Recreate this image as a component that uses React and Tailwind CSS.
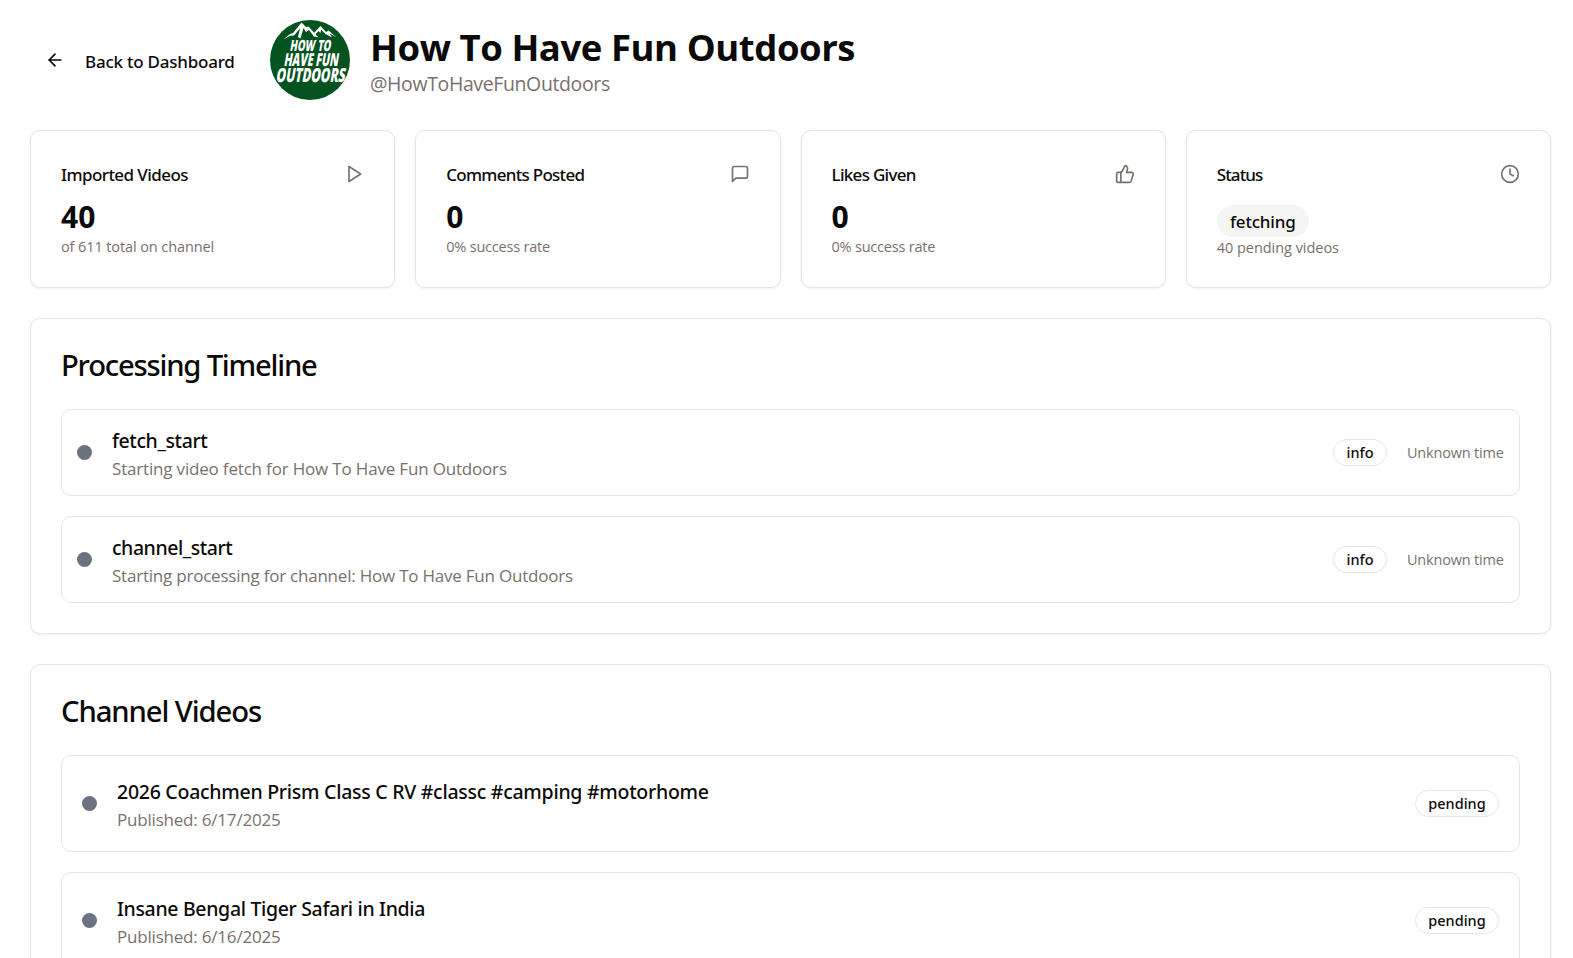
import { ArrowLeft, ThumbsUp, Clock } from "lucide-react";

const medium = "font-['Noto_Sans',sans-serif] font-medium text-[#0c0a09] whitespace-nowrap";
const muted = "font-['Open_Sans',sans-serif] text-[#78716c] whitespace-nowrap";

function Outline({ className, children }) {
  return (
    <svg className={className} viewBox="0 0 24 24" fill="none" stroke="currentColor" strokeWidth="2" strokeLinecap="round" strokeLinejoin="round">
      {children}
    </svg>
  );
}

function PlayIcon({ className }) {
  return (
    <Outline className={className}>
      <polygon points="6 3 20 12 6 21 6 3" />
    </Outline>
  );
}

function MessageIcon({ className }) {
  return (
    <Outline className={className}>
      <path d="M21 15a2 2 0 0 1-2 2H7l-4 4V5a2 2 0 0 1 2-2h14a2 2 0 0 1 2 2z" />
    </Outline>
  );
}

function Logo() {
  return (
    <svg className="h-20 w-20 shrink-0 overflow-visible" viewBox="0 0 80 80">
      <circle cx="40" cy="40" r="40" fill="#04521f" />
      <path
        d="M13.5 19.5 L20 14 L23 13 L31.5 2.5 L36 7 L38.5 6.5 L48.5 17.5 L44 16.5 L39 10 L36 12 L33.5 8 L30.5 18.5 L28 17 L30 8.5 L24 15.5 L20 15.8 Z"
        fill="#fff"
      />
      <path d="M43 14 L50.5 6 L56 12 L58.5 10.5 L66 17 L59.5 13.5 L62 17.5 L55.5 14 L51 9.5 L50.5 13 L48.5 11 L44.5 15.5 Z" fill="#fff" />
      <g fill="#fff" fontFamily="'Open Sans', sans-serif" fontWeight="800" transform="skewX(-10)">
        <text x="25" y="31" fontSize="15.5" textLength="41" lengthAdjust="spacingAndGlyphs">HOW TO</text>
        <text x="21.5" y="46" fontSize="18" textLength="54.5" lengthAdjust="spacingAndGlyphs">HAVE FUN</text>
        <text x="16.5" y="62" fontSize="19.5" textLength="69" lengthAdjust="spacingAndGlyphs">OUTDOORS</text>
      </g>
    </svg>
  );
}

function StatCard({ title, titleClass, icon: Icon, children }) {
  return (
    <div className="h-[158px] rounded-[10px] border border-[#e7e5e4] bg-white p-[30px] shadow-[0_1px_3px_0_rgba(0,0,0,0.06)]">
      <div className="flex h-[26px] items-center justify-between">
        <div className={`${medium} pt-[2px] text-[17px] leading-[26px] ${titleClass}`}>{title}</div>
        <Icon className="h-5 w-5 text-[#78716c]" />
      </div>
      {children}
    </div>
  );
}

function Metric({ value, note, noteClass }) {
  return (
    <>
      <div className="mt-[11px] font-['Open_Sans',sans-serif] text-[30px] leading-[38px] font-bold text-[#0c0a09]">{value}</div>
      <div className={`${muted} text-[14.5px] leading-[22px] ${noteClass}`}>{note}</div>
    </>
  );
}

function Panel({ title, titleClass, children }) {
  return (
    <section className="mt-[30px] rounded-[10px] border border-[#e7e5e4] bg-white p-[30px] shadow-[0_1px_3px_0_rgba(0,0,0,0.06)]">
      <h2 className={`${medium} text-[29.25px] leading-[33px] ${titleClass}`}>{title}</h2>
      <div className="mt-[27px] flex flex-col gap-5">{children}</div>
    </section>
  );
}

function Badge({ className, children }) {
  return (
    <span className={`${medium} flex h-[27px] items-center justify-center rounded-full border border-[#e7e5e4] pb-[2px] text-[14.5px] leading-5 ${className}`}>
      {children}
    </span>
  );
}

function Row({ className, title, titleClass, text, textClass, children }) {
  return (
    <div className={`flex items-center rounded-[10px] border border-[#e7e5e4] ${className}`}>
      <span className="h-[15px] w-[15px] shrink-0 rounded-full bg-[#6b7280]" />
      <div className="ml-5 flex-1 pt-1">
        <div className={`${medium} text-[19.5px] leading-7 ${titleClass}`}>{title}</div>
        <div className={`${muted} text-[17px] leading-7 ${textClass}`}>{text}</div>
      </div>
      {children}
    </div>
  );
}

const events = [
  { title: "fetch_start", titleClass: "tracking-[-0.4px]", text: "Starting video fetch for How To Have Fun Outdoors", textClass: "tracking-[-0.18px]" },
  { title: "channel_start", titleClass: "tracking-[-0.45px]", text: "Starting processing for channel: How To Have Fun Outdoors", textClass: "tracking-[-0.22px]" },
];

const videos = [
  { title: "2026 Coachmen Prism Class C RV #classc #camping #motorhome", titleClass: "tracking-[-0.265px]", text: "Published: 6/17/2025" },
  { title: "Insane Bengal Tiger Safari in India", titleClass: "tracking-[-0.33px]", text: "Published: 6/16/2025" },
];

export default function App() {
  return (
    <div className="h-screen overflow-hidden bg-white pt-5 pr-[22px] pl-[30px]">
      <header className="flex h-20 items-center">
        <button className="flex w-[220px] items-center gap-5 pl-[15px]">
          <ArrowLeft className="h-5 w-5 text-[#0c0a09]" />
          <span className={`${medium} pt-[4px] text-[17px] leading-[26px] tracking-[-0.23px]`}>Back to Dashboard</span>
        </button>
        <div className="ml-5">
          <Logo />
        </div>
        <div className="ml-5 pt-[3px]">
          <h1 className="font-['Open_Sans',sans-serif] text-[36.5px] leading-[45px] font-bold tracking-[-0.44px] whitespace-nowrap text-[#0c0a09]">
            How To Have Fun Outdoors
          </h1>
          <p className={`${muted} -mt-px pb-px text-[19.5px] leading-[29px] tracking-[-0.38px]`}>@HowToHaveFunOutdoors</p>
        </div>
      </header>

      <div className="mt-[30px] grid grid-cols-4 gap-5">
        <StatCard title="Imported Videos" titleClass="tracking-[-0.57px]" icon={PlayIcon}>
          <Metric value="40" note="of 611 total on channel" noteClass="tracking-[-0.1px]" />
        </StatCard>
        <StatCard title="Comments Posted" titleClass="tracking-[-0.72px]" icon={MessageIcon}>
          <Metric value="0" note="0% success rate" noteClass="tracking-[-0.2px]" />
        </StatCard>
        <StatCard title="Likes Given" titleClass="tracking-[-0.7px]" icon={ThumbsUp}>
          <Metric value="0" note="0% success rate" noteClass="tracking-[-0.2px]" />
        </StatCard>
        <StatCard title="Status" titleClass="tracking-[-0.9px]" icon={Clock}>
          <div className={`${medium} mt-[18px] flex h-8 w-[92px] items-center justify-center rounded-full bg-[#f5f5f4] pt-px text-[17px] leading-6 tracking-[-0.2px]`}>
            fetching
          </div>
          <div className={`${muted} text-[14.5px] leading-[21px] tracking-[-0.04px]`}>40 pending videos</div>
        </StatCard>
      </div>

      <Panel title="Processing Timeline" titleClass="tracking-[-1.22px]">
        {events.map((e) => (
          <Row key={e.title} className="h-[87px] px-[15px]" {...e}>
            <Badge className="w-[54px]">info</Badge>
            <span className={`${muted} ml-5 w-[97px] text-[14.5px] leading-5 tracking-[-0.2px]`}>Unknown time</span>
          </Row>
        ))}
      </Panel>

      <Panel title="Channel Videos" titleClass="tracking-[-1.1px]">
        {videos.map((v) => (
          <Row key={v.title} className="h-[97px] px-5" textClass="tracking-[-0.2px]" {...v}>
            <Badge className="w-[84px]">pending</Badge>
          </Row>
        ))}
      </Panel>
    </div>
  );
}
